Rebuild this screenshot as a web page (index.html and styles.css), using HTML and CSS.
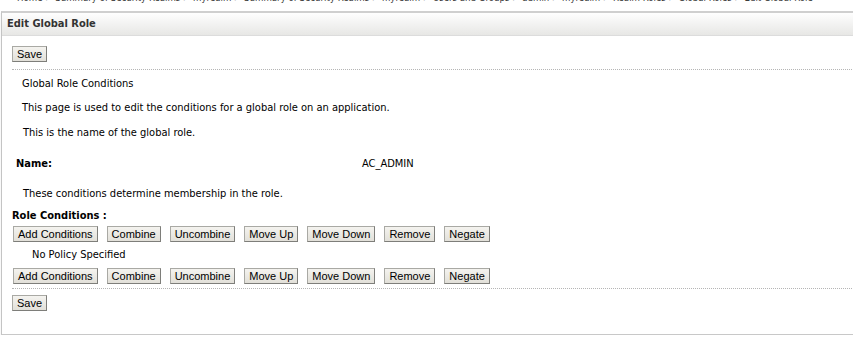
FILE: index.html
```
<!DOCTYPE html>
<html lang="en">
<head>
  <meta charset="UTF-8">
  <title>Edit Global Role</title>
  <link rel="stylesheet" href="styles.css">
</head>
<body>
  <div class="breadcrumb">Home &gt; Summary of Security Realms &gt; myrealm &gt; Summary of Security Realms &gt; myrealm &gt; Users and Groups &gt; admin &gt; myrealm &gt; Realm Roles &gt; Global Roles &gt; Edit Global Role</div>

  <div class="panel">
    <div class="panel-header">Edit Global Role</div>
    <div class="panel-body">
      <div class="toolbar top">
        <button class="btn">Save</button>
      </div>

      <div class="section">
        <p class="intro">Global Role Conditions</p>
        <p class="intro">This page is used to edit the conditions for a global role on an application.</p>
        <p class="help first">This is the name of the global role.</p>

        <div class="field">
          <span class="field-label">Name:</span>
          <span class="field-value">AC_ADMIN</span>
        </div>

        <p class="help">These conditions determine membership in the role.</p>

        <div class="conditions-title">Role Conditions :</div>
        <div class="btn-row">
          <button class="btn">Add Conditions</button>
          <button class="btn">Combine</button>
          <button class="btn">Uncombine</button>
          <button class="btn">Move Up</button>
          <button class="btn">Move Down</button>
          <button class="btn">Remove</button>
          <button class="btn">Negate</button>
        </div>
        <div class="no-policy">No Policy Specified</div>
        <div class="btn-row">
          <button class="btn">Add Conditions</button>
          <button class="btn">Combine</button>
          <button class="btn">Uncombine</button>
          <button class="btn">Move Up</button>
          <button class="btn">Move Down</button>
          <button class="btn">Remove</button>
          <button class="btn">Negate</button>
        </div>
      </div>

      <div class="toolbar bottom">
        <button class="btn">Save</button>
      </div>
    </div>
  </div>
</body>
</html>
```

FILE: styles.css
```
* {
  box-sizing: border-box;
}

body {
  margin: 0;
  background: #fff;
  font-family: Tahoma, "DejaVu Sans Condensed", "DejaVu Sans", sans-serif;
  font-size: 11px;
  color: #000;
  overflow: hidden;
}

.breadcrumb {
  margin-top: -8px;
  margin-bottom: 7px;
  height: 12px;
  padding-left: 17px;
  font-size: 9.6px;
  line-height: 12px;
  color: #3b3b3b;
  white-space: nowrap;
  overflow: hidden;
}

.panel {
  margin: 0 -20px 0 1px;
  border: 1px solid #c4c4c4;
  border-top: 2px solid #cfcfcf;
  border-bottom: 1px solid #c8c8c8;
  height: 324px;
  box-shadow: 0 1px 0 #9a9a9a, 0 2px 1px #d8d8d8;
}

.panel-header {
  height: 23px;
  padding: 0 5px;
  font-weight: bold;
  font-size: 11px;
  line-height: 22px;
  color: #333;
  background: linear-gradient(#fefefe, #e7e7e5);
  border-bottom: 1px solid #dcdcdc;
}

.panel-body {
  padding: 10px 0 0 10px;
}

.btn {
  height: 16px;
  padding: 0 4px;
  margin: 0;
  font-family: "Liberation Sans", Arial, sans-serif;
  font-size: 11px;
  line-height: 14px;
  color: #000;
  background: linear-gradient(#f4f3ef, #e2e0d9);
  border: 1px solid #a9a9a4;
  border-right-color: #7e7e7a;
  border-bottom-color: #7e7e7a;
  border-radius: 0;
}

.toolbar.top {
  padding-bottom: 7px;
  border-bottom: 1px dotted #b5b5b5;
}

.toolbar.bottom {
  padding-top: 6px;
  border-top: 1px dotted #b5b5b5;
}

.section {
  padding-top: 7px;
  padding-bottom: 4px;
}

.section p {
  margin: 0;
  line-height: 13px;
}

.intro {
  padding-left: 10px;
  margin-bottom: 11px !important;
}

.help {
  padding-left: 11px;
}

.help.first {
  padding-top: 1px;
}

.field {
  display: flex;
  padding: 18px 0 17px 4px;
  line-height: 13px;
}

.field-label {
  width: 346px;
  font-weight: bold;
}

.conditions-title {
  margin-top: 9px;
  margin-bottom: 4px;
  font-weight: bold;
  line-height: 13px;
}

.btn-row {
  display: flex;
  gap: 9px;
  padding: 0 0 0 1px;
}

.no-policy {
  padding: 6px 0 6px 20px;
  line-height: 14px;
}
```
